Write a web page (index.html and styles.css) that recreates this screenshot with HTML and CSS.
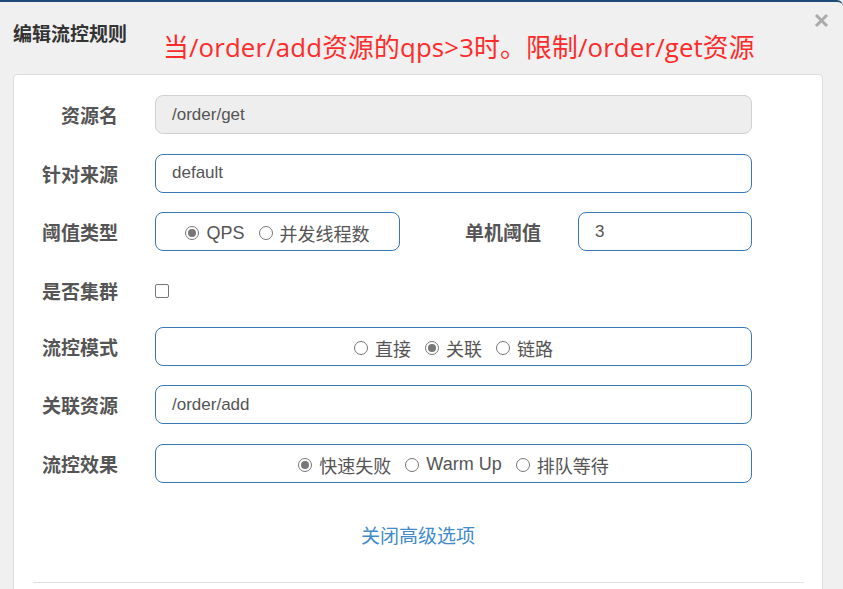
FILE: index.html
```html
<!DOCTYPE html>
<html lang="zh">
<head>
<meta charset="utf-8">
<title>编辑流控规则</title>
<link rel="stylesheet" href="styles.css">
</head>
<body>
<div class="modal">
  <div class="modal-header">
    <h4 class="title">编辑流控规则</h4>
    <span class="note">当/order/add资源的qps&gt;3时。限制/order/get资源</span>
    <span class="close" aria-label="关闭">
      <svg width="15" height="15" viewBox="0 0 15 15"><path d="M2 2 L13 13 M13 2 L2 13" stroke="#ababab" stroke-width="3" stroke-linecap="butt"/></svg>
    </span>
  </div>
  <div class="card">
    <div class="row">
      <label class="label">资源名</label>
      <div class="input disabled">/order/get</div>
    </div>
    <div class="row">
      <label class="label">针对来源</label>
      <div class="input">default</div>
    </div>
    <div class="row">
      <label class="label">阈值类型</label>
      <div class="radio-box narrow">
        <span class="opt"><span class="radio checked"></span>QPS</span>
        <span class="opt"><span class="radio"></span>并发线程数</span>
      </div>
      <label class="label label2">单机阈值</label>
      <div class="input small">3</div>
    </div>
    <div class="row row-check">
      <label class="label">是否集群</label>
      <span class="checkbox"></span>
    </div>
    <div class="row">
      <label class="label">流控模式</label>
      <div class="radio-box">
        <span class="opt"><span class="radio"></span>直接</span>
        <span class="opt"><span class="radio checked"></span>关联</span>
        <span class="opt"><span class="radio"></span>链路</span>
      </div>
    </div>
    <div class="row">
      <label class="label">关联资源</label>
      <div class="input">/order/add</div>
    </div>
    <div class="row">
      <label class="label">流控效果</label>
      <div class="radio-box">
        <span class="opt"><span class="radio checked"></span>快速失败</span>
        <span class="opt"><span class="radio"></span>Warm Up</span>
        <span class="opt"><span class="radio"></span>排队等待</span>
      </div>
    </div>
    <div class="link-row"><a class="link">关闭高级选项</a></div>
    <hr class="divider">
  </div>
</div>
</body>
</html>
```
FILE: styles.css
```css
html, body {
  margin: 0;
  padding: 0;
  height: 100%;
  overflow: hidden;
}
body {
  background: #f0f0f0;
  font-family: "Liberation Sans", "Noto Sans CJK SC", sans-serif;
  color: #555;
}
.modal {
  border-top: 2px solid #1f4a78;
  border-top-right-radius: 6px;
  min-height: 100%;
  box-sizing: border-box;
}
.modal-header {
  display: flex;
  align-items: flex-start;
  height: 72px;
  padding: 0 15px 0 13px;
}
.title {
  margin: 19px 0 0 0;
  font-family: "Noto Sans CJK SC", sans-serif;
  font-size: 19px;
  line-height: 24px;
  font-weight: 700;
  color: #333;
}
.note {
  margin: 29px 0 0 36px;
  font-family: "Open Sans", "Noto Sans CJK SC", sans-serif;
  font-size: 25.8px;
  letter-spacing: 0.15px;
  line-height: 32px;
  color: #fe2b2b;
  white-space: nowrap;
}
.close {
  margin-left: auto;
  margin-top: 11px;
  margin-right: -1px;
  display: flex;
}
.card {
  margin-left: 13px;
  width: 810px;
  box-sizing: border-box;
  background: #fff;
  border: 1px solid #ddd;
  border-bottom: none;
  border-radius: 5px 5px 0 0;
  padding-top: 20px;
  min-height: 520px;
}
.row {
  display: flex;
  align-items: center;
  height: 39px;
  margin-bottom: 19.5px;
}
.row-check {
  height: 39px;
  margin-bottom: 17px;
}
.label {
  width: 104px;
  margin-right: 37px;
  text-align: right;
  font-family: "Noto Sans CJK SC", sans-serif;
  font-size: 19px;
  font-weight: 700;
  color: #555;
  flex: none;
}
.label2 {
  width: 141px;
}
.input {
  width: 597px;
  height: 39px;
  box-sizing: border-box;
  border: 1px solid #3a78b5;
  border-radius: 8px;
  padding-left: 16px;
  display: flex;
  align-items: center;
  font-size: 17px;
  color: #555;
  flex: none;
}
.input.disabled {
  background: #eee;
  border-color: #d0d0d0;
}
.input.small {
  width: 174px;
}
.radio-box {
  width: 597px;
  height: 39px;
  box-sizing: border-box;
  border: 1px solid #3a78b5;
  border-radius: 8px;
  display: flex;
  align-items: center;
  justify-content: center;
  gap: 14px;
  font-size: 18px;
  color: #555;
  flex: none;
  padding-top: 3px;
}
.radio-box.narrow {
  width: 245px;
}
.opt {
  display: inline-flex;
  align-items: center;
  gap: 7px;
  white-space: nowrap;
}
.radio {
  width: 14px;
  height: 14px;
  box-sizing: border-box;
  border: 1px solid #777;
  border-radius: 50%;
  display: inline-flex;
  align-items: center;
  justify-content: center;
  background: #fff;
}
.radio.checked::after {
  content: "";
  width: 8px;
  height: 8px;
  border-radius: 50%;
  background: #777;
}
.checkbox {
  width: 14px;
  height: 14px;
  box-sizing: border-box;
  border: 1px solid #777;
  border-radius: 2px;
  margin-top: 2px;
}
.link-row {
  text-align: center;
  padding-top: 19.5px;
  height: 79.5px;
  box-sizing: border-box;
}
.link {
  font-family: "Noto Sans CJK SC", sans-serif;
  font-size: 19px;
  line-height: 26px;
  color: #428bca;
  text-decoration: none;
}
.divider {
  margin: 0 18px 0 19px;
  border: none;
  border-top: 1px solid #e2e2e2;
}
```
